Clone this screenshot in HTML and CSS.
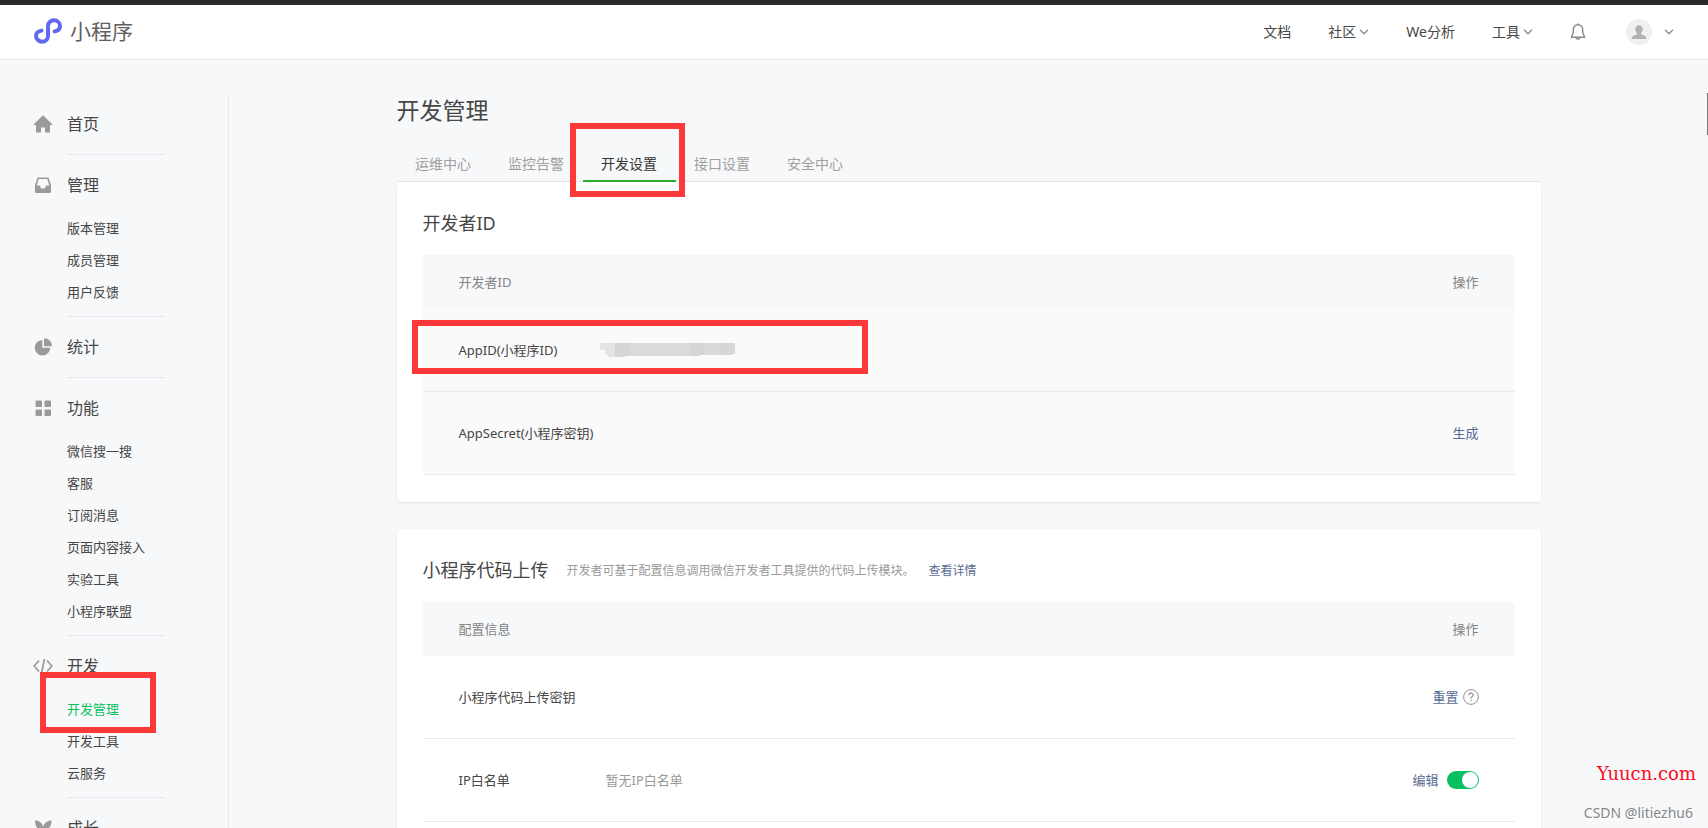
FILE: index.html
```html
<!DOCTYPE html>
<html lang="zh-CN">
<head>
<meta charset="utf-8">
<title>小程序 - 开发管理</title>
<link rel="stylesheet" href="styles.css">
</head>
<body>
<header class="header">
  <a class="brand" href="#">
    <svg class="brand-logo" width="28" height="26" viewBox="0 0 28 26" fill="none" stroke="#6467f0" stroke-width="4" stroke-linecap="round"><path d="M7.500 12.600C4.500 13.100 2 14.900 2 17.800C2 21.300 5 23.700 8 23.700C11.500 23.700 14 21.200 14 18V8C14 4.800 16.500 2.300 20 2.300C23.200 2.300 26 4.700 26 8C26 10.900 23.600 12.900 20.600 13.400"/></svg>
    <span class="brand-name">小程序</span>
  </a>
  <nav class="topnav">
    <a href="#">文档</a>
    <a href="#">社区<svg class="chev" width="10" height="6" viewBox="0 0 10 6"><path d="M1 .8 5 4.800 9 .8"/></svg></a>
    <a href="#">We分析</a>
    <a href="#">工具<svg class="chev" width="10" height="6" viewBox="0 0 10 6"><path d="M1 .8 5 4.800 9 .8"/></svg></a>
    <button class="icon-button" aria-label="通知"><svg width="16" height="18" viewBox="0 0 16 18" fill="none" stroke="#8a8a8a" stroke-width="1.400" stroke-linejoin="round"><path d="M8 1.800C5.200 1.800 3.300 4 3.300 6.600V9.500L1.300 14.300H14.700L12.700 9.500V6.600C12.700 4 10.800 1.800 8 1.800ZM6 14.800Q8 17.600 10 14.800M8 .4V1.800"/></svg></button>
    <button class="icon-button account" aria-label="账号">
      <svg width="26" height="26" viewBox="0 0 26 26"><circle cx="13" cy="13" r="13" fill="#f0f0f1"/><path d="M13 6.200C15.300 6.200 16.700 7.900 16.700 10.200C16.700 12 16 13.200 15.100 14V15.300L19 17C19.800 17.400 20.200 18 20.200 18.700V20H5.800V18.700C5.800 18 6.200 17.400 7 17L10.900 15.300V14C10 13.200 9.300 12 9.300 10.200C9.300 7.900 10.700 6.200 13 6.200Z" fill="#b2b2b2"/></svg>
      <svg class="chev" width="10" height="6" viewBox="0 0 10 6"><path d="M1 .8 5 4.800 9 .8"/></svg>
    </button>
  </nav>
</header>

<div class="body">
  <aside class="sidebar">
    <section class="group">
      <a class="group-title" href="#"><svg width="20" height="18" viewBox="0 0 20 18" fill="#9a9a9a"><path d="M10 0.300 19.300 9.300V10H17V17.500H12V12.500H8V17.500H3V10H.7V9.300Z"/></svg>首页</a>
    </section>
    <section class="group">
      <a class="group-title" href="#"><svg width="20" height="18" viewBox="0 0 20 18"><path fill="#9a9a9a" fill-rule="evenodd" d="M4.500 1.500H15.500L18 9V15.500Q18 17 16.500 17H3.500Q2 17 2 15.500V9ZM5.700 3.100 3.700 9.600H7.200V10.500Q7.200 12.600 10 12.600Q12.800 12.600 12.800 10.500V9.600H16.300L14.300 3.100Z"/></svg>管理</a>
      <ul class="links">
        <li><a href="#">版本管理</a></li>
        <li><a href="#">成员管理</a></li>
        <li><a href="#">用户反馈</a></li>
      </ul>
    </section>
    <section class="group">
      <a class="group-title" href="#"><svg width="20" height="18" viewBox="0 0 20 18" fill="#9a9a9a"><path d="M9.300 2V9.800H17.200A7.700 7.700 0 1 1 9.300 2Z"/><path d="M11 .2A8 8 0 0 1 19 8.200H11Z"/></svg>统计</a>
    </section>
    <section class="group">
      <a class="group-title" href="#"><svg width="20" height="18" viewBox="0 0 20 18" fill="#9a9a9a"><rect x="2.500" y="1.500" width="6.500" height="6.500" rx="1"/><rect x="11.500" y="1.500" width="6.500" height="6.500" rx="1"/><rect x="2.500" y="10.500" width="6.500" height="6.500" rx="1"/><rect x="11.500" y="10.500" width="6.500" height="6.500" rx="1"/></svg>功能</a>
      <ul class="links">
        <li><a href="#">微信搜一搜</a></li>
        <li><a href="#">客服</a></li>
        <li><a href="#">订阅消息</a></li>
        <li><a href="#">页面内容接入</a></li>
        <li><a href="#">实验工具</a></li>
        <li><a href="#">小程序联盟</a></li>
      </ul>
    </section>
    <section class="group">
      <a class="group-title" href="#"><svg width="20" height="18" viewBox="0 0 20 18" fill="none" stroke="#9a9a9a" stroke-width="1.700"><path d="M6 3.500 1.200 9 6 14.500M14 3.500 18.800 9 14 14.500M11.400 2 8.600 16"/></svg>开发</a>
      <ul class="links">
        <li><a class="active" href="#">开发管理</a></li>
        <li><a href="#">开发工具</a></li>
        <li><a href="#">云服务</a></li>
      </ul>
    </section>
    <section class="group">
      <a class="group-title" href="#"><svg width="20" height="18" viewBox="0 0 20 18" fill="#9a9a9a"><path d="M2 1.500C6.500 1.500 9.300 4 10.200 8C11.200 4 14 1.500 18.500 1.500C18.500 7 16 11 11.200 11.500V17H9.200V11.500C4.500 11 2 7 2 1.500Z"/></svg>成长</a>
    </section>
  </aside>

  <main class="main">
    <div class="content">
      <h1 class="page-title">开发管理</h1>
      <nav class="tabs">
        <a href="#">运维中心</a>
        <a href="#">监控告警</a>
        <a class="current" href="#">开发设置</a>
        <a href="#">接口设置</a>
        <a href="#">安全中心</a>
      </nav>

      <section class="card">
        <div class="card-head"><h2>开发者ID</h2></div>
        <table class="table shaded">
          <thead><tr><th class="name">开发者ID</th><th></th><th class="ops">操作</th></tr></thead>
          <tbody>
            <tr>
              <td>AppID(小程序ID)</td>
              <td class="masked"><svg width="136" height="14" viewBox="0 0 136 14"><path fill="#e4e4e4" d="M0 0H15V14H8V11H5V7H0Z"/><path fill="#d6d6d6" d="M15 0H30V13H25V14H15Z"/><path fill="#dbdbdb" d="M30 0H90V13H30Z"/><path fill="#d6d6d6" d="M90 0H105V12H100V13H90Z"/><path fill="#dadada" d="M105 0H120V12H105Z"/><path fill="#d6d6d6" d="M120 0H135V11H132V12H120Z"/></svg></td>
              <td></td>
            </tr>
            <tr><td>AppSecret(小程序密钥)</td><td></td><td class="ops"><a href="#">生成</a></td></tr>
          </tbody>
        </table>
      </section>

      <section class="card">
        <div class="card-head">
          <h2>小程序代码上传</h2>
          <p class="hint">开发者可基于配置信息调用微信开发者工具提供的代码上传模块。</p>
          <a class="hint" href="#">查看详情</a>
        </div>
        <table class="table">
          <thead><tr><th class="name">配置信息</th><th></th><th class="ops">操作</th></tr></thead>
          <tbody>
            <tr>
              <td>小程序代码上传密钥</td><td></td>
              <td class="ops"><div class="actions"><a href="#">重置</a><svg width="16" height="16" viewBox="0 0 16 16" fill="none" stroke="#929292"><circle cx="8" cy="8" r="7.400"/><path stroke-width="1.200" d="M5.800 6.300C5.800 5 6.700 4.200 8 4.200C9.300 4.200 10.200 5 10.200 6.100C10.200 7.500 8 7.700 8 9.600M8 10.800V12"/></svg></div></td>
            </tr>
            <tr>
              <td><label for="ip">IP白名单</label></td><td class="muted">暂无IP白名单</td>
              <td class="ops"><div class="actions wide"><a href="#">编辑</a><input class="switch" id="ip" type="checkbox" checked></div></td>
            </tr>
            <tr><td></td><td></td><td></td></tr>
          </tbody>
        </table>
      </section>
    </div>
  </main>
</div>

<div class="mark mark-tab"></div>
<div class="mark mark-appid"></div>
<div class="mark mark-menu"></div>
<div class="scroll-thumb"></div>
<div class="site-mark">Yuucn.com</div>
<div class="author-mark">CSDN @litiezhu6</div>
</body>
</html>
```
FILE: styles.css
```css
* { box-sizing: border-box; }

body {
  margin: 0;
  height: 100vh;
  overflow: hidden;
  position: relative;
  background: #f7f8fa;
  color: #464646;
  font-family: "Noto Sans", "Noto Sans CJK SC", sans-serif;
  font-size: 12px;
  line-height: 20px;
}

a { color: inherit; text-decoration: none; }
h1, h2, p, ul { margin: 0; padding: 0; font-weight: 400; }
ul { list-style: none; }

.header {
  display: flex;
  align-items: center;
  justify-content: space-between;
  height: 60px;
  padding: 0 34px;
  border-top: 5px solid #2b2b2b;
  border-bottom: 1px solid #e4e5e7;
  background: #fff;
}
.brand { display: flex; align-items: center; gap: 8px; padding-bottom: 2px; }
.brand-name { font-size: 21px; line-height: 28px; color: #606060; }

.topnav { display: flex; align-items: center; gap: 37px; font-size: 14px; }
.topnav a { display: flex; align-items: center; gap: 3px; }
.chev { fill: none; stroke: #8c8c8c; stroke-width: 1.3; }
.icon-button {
  display: flex;
  align-items: center;
  gap: 12px;
  padding: 0;
  border: 0;
  background: none;
}
.account { margin-left: 3px; }

.body { display: flex; align-items: flex-start; }

.sidebar {
  flex: none;
  width: 229px;
  margin-top: 34px;
  padding-left: 33px;
  border-right: 1px solid #e7e8eb;
}
.group::after {
  content: "";
  display: block;
  width: 98px;
  height: 1px;
  margin: 1px 0 0 34px;
  background: #e7e8eb;
}
.group:has(.links)::after { margin-top: 8px; }
.group-title {
  display: flex;
  align-items: center;
  gap: 14px;
  height: 59px;
  font-size: 16px;
}
.links { margin-top: -2px; padding-left: 34px; font-size: 13px; }
.links a { display: block; line-height: 32px; }
.links .active { color: #07c160; }

.main { flex: 1; padding: 33px 24px 0; }
.content { max-width: 1144px; margin: 0 auto; }
.page-title { font-size: 23px; line-height: 34px; }

.tabs {
  display: flex;
  margin-top: 20px;
  border-bottom: 1px solid #e4e5e7;
  font-size: 14px;
  color: #a0a0a0;
}
.tabs a {
  width: 93px;
  margin-bottom: -1px;
  border-bottom: 2px solid transparent;
  line-height: 33px;
  text-align: center;
}
.tabs .current { color: #353535; border-bottom-color: #2aae34; }

.card {
  margin-bottom: 27px;
  padding: 0 26px 27px;
  border-radius: 4px;
  background: #fff;
  box-shadow: 0 1px 2px #dfe1e4;
}
.card-head { display: flex; align-items: center; height: 73px; padding-top: 8px; }
.card-head h2 { font-size: 18px; line-height: 28px; }
.hint { padding-top: 3px; }
p.hint { margin: 0 14px 0 18px; color: #9a9a9a; }
a.hint, .table a { color: #576b95; }

.table { width: 100%; border-spacing: 0; table-layout: fixed; font-size: 13px; }
.table th, .table td { padding: 0 0 0 36px; text-align: left; font-weight: 400; }
.table th { height: 54px; background: #f7f8fa; color: #848484; }
.table td { height: 83px; border-bottom: 1px solid #e9eaec; }
.table .name { width: 183px; }
.table th:nth-child(2), .table td:nth-child(2) { padding-left: 0; }
.table th.ops { width: 160px; }
.table .ops { padding: 0 36px 0 0; text-align: right; }
.table td.muted { color: #9a9a9a; }
.table .masked svg { display: block; margin-left: -6px; }
.shaded td { background: #fafafa; }
.actions { display: flex; align-items: center; justify-content: flex-end; gap: 4px; }
.actions.wide { gap: 8px; }

.switch {
  appearance: none;
  width: 32px;
  height: 18px;
  margin: 0;
  padding: 1px;
  border-radius: 9px;
  background: #07c160;
}
.switch::before {
  content: "";
  display: block;
  width: 16px;
  height: 16px;
  margin-left: auto;
  border-radius: 50%;
  background: #fff;
}

/* annotations drawn over the page */
.mark { position: absolute; border: 6px solid #fc3838; }
.mark-tab { left: 570px; top: 123px; width: 115px; height: 74px; }
.mark-appid { left: 412px; top: 320px; width: 456px; height: 54px; }
.mark-menu { left: 40px; top: 672px; width: 116px; height: 61px; }
.scroll-thumb { position: absolute; right: 0; top: 93px; width: 1px; height: 42px; background: #777; }
.site-mark {
  position: absolute;
  right: 12px;
  bottom: 44px;
  color: #fb0a25;
  font: 18px/20px "DejaVu Serif", serif;
}
.author-mark {
  position: absolute;
  right: 15px;
  bottom: 5px;
  color: #858688;
  font-size: 14px;
  text-shadow: 1px 1px 0 #fff;
}
```
